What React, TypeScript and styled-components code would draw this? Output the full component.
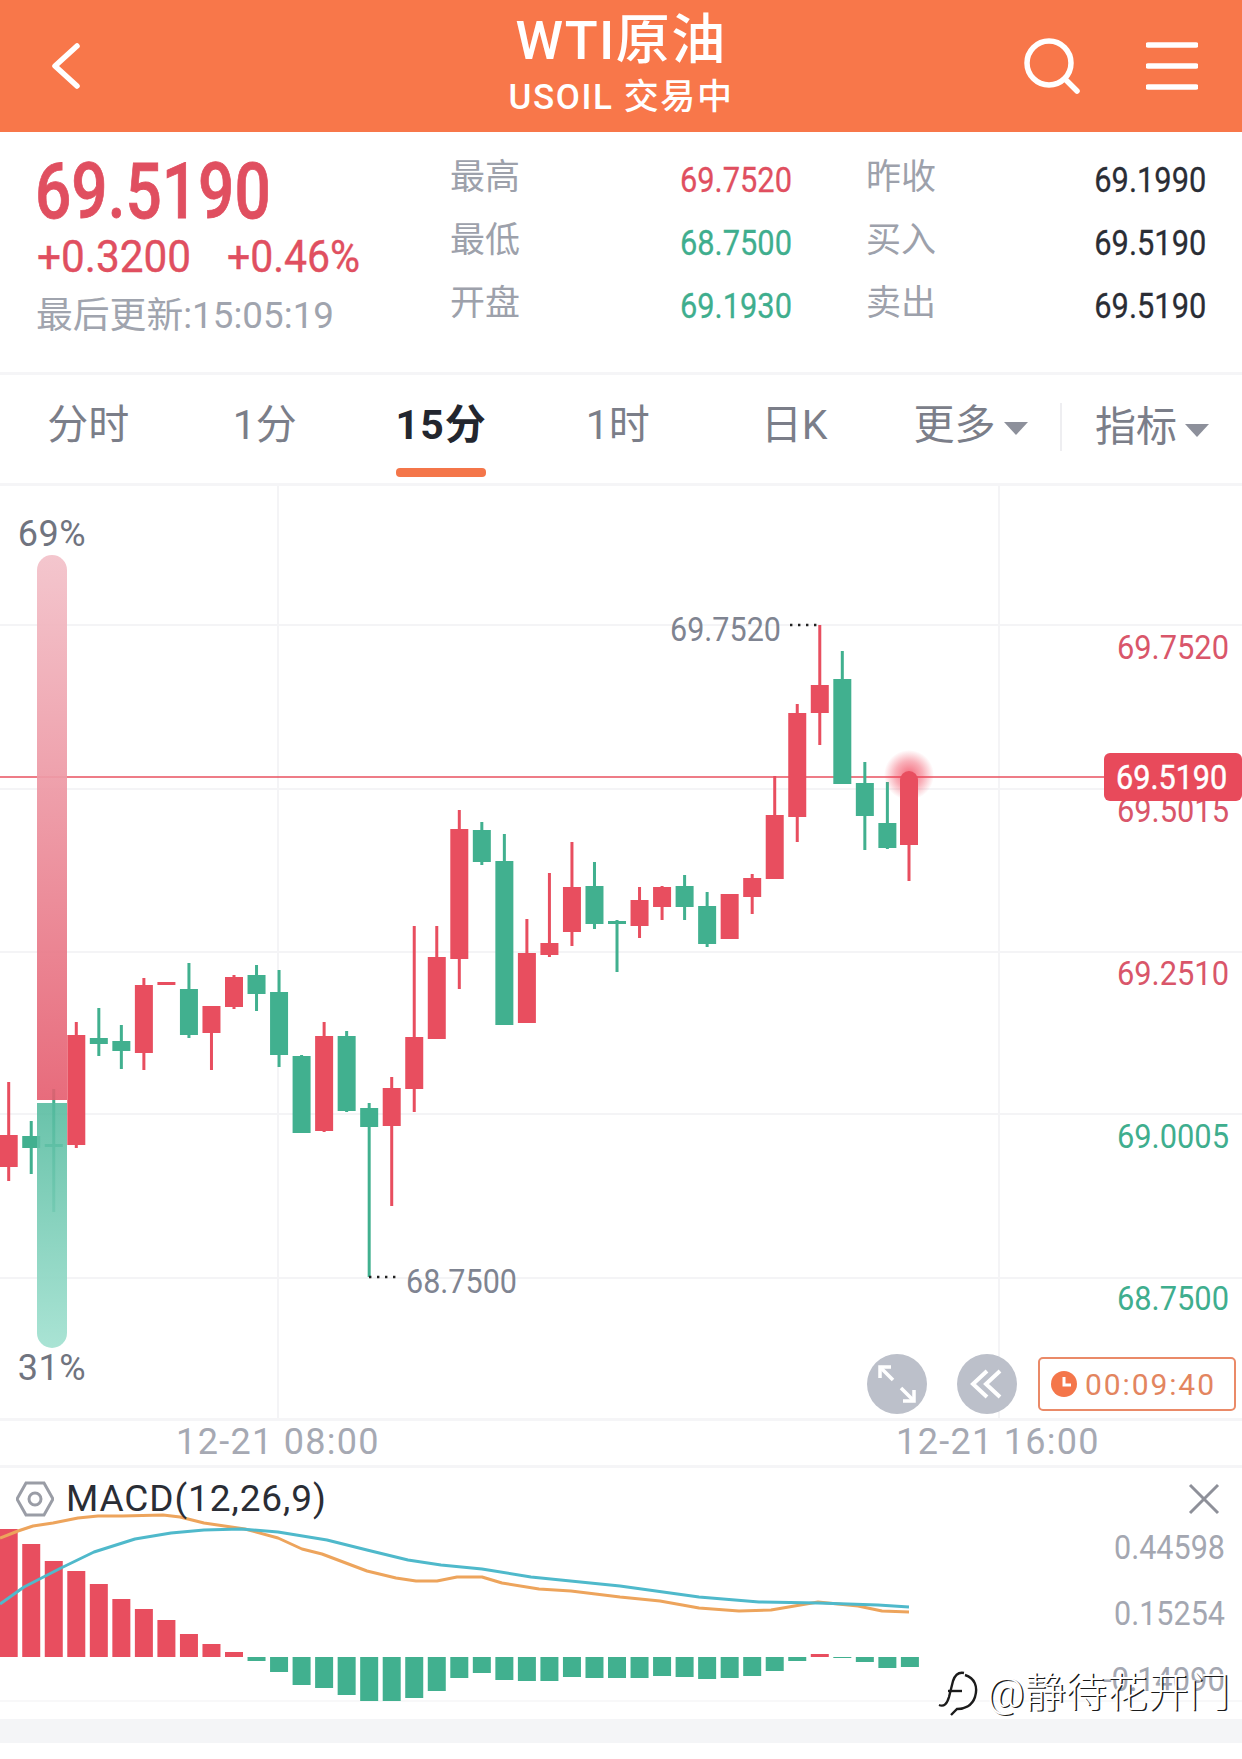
import styled, { createGlobalStyle } from "styled-components";

const latin = `"Roboto", "Noto Sans CJK SC", sans-serif`;

const RED = "#e84e5f";
const GREEN = "#41b08f";

type Candle = [up: boolean, high: number, top: number, bottom: number, low: number];

const candles: Candle[] = [
  [true, 1082, 1135, 1167, 1181],
  [false, 1121, 1136, 1148, 1174],
  [false, 1089, 1144, 1147, 1212],
  [true, 1022, 1035, 1145, 1148],
  [false, 1008, 1038, 1044, 1056],
  [false, 1025, 1041, 1051, 1069],
  [true, 978, 985, 1053, 1070],
  [true, 982, 982, 985, 985],
  [false, 963, 989, 1035, 1038],
  [true, 1006, 1006, 1033, 1070],
  [true, 975, 977, 1007, 1009],
  [false, 965, 975, 994, 1011],
  [false, 970, 992, 1055, 1067],
  [false, 1055, 1056, 1133, 1133],
  [true, 1022, 1036, 1131, 1132],
  [false, 1031, 1036, 1111, 1112],
  [false, 1103, 1108, 1127, 1277],
  [true, 1077, 1088, 1126, 1206],
  [true, 926, 1037, 1089, 1112],
  [true, 926, 957, 1039, 1039],
  [true, 810, 829, 959, 989],
  [false, 822, 830, 862, 865],
  [false, 834, 861, 1025, 1025],
  [true, 919, 953, 1023, 1023],
  [true, 873, 943, 955, 957],
  [true, 842, 887, 932, 946],
  [false, 862, 886, 924, 929],
  [false, 920, 921, 924, 972],
  [true, 887, 900, 926, 938],
  [true, 886, 887, 907, 920],
  [false, 875, 886, 907, 920],
  [false, 892, 906, 944, 947],
  [true, 894, 894, 939, 939],
  [true, 874, 878, 897, 914],
  [true, 776, 815, 879, 879],
  [true, 704, 713, 817, 842],
  [true, 625, 685, 713, 745],
  [false, 651, 679, 784, 784],
  [false, 762, 783, 816, 850],
  [false, 782, 823, 848, 849],
];

// positive = red bar above the zero line, negative = green bar below it
const histogram = [
  128, 113, 96, 86, 73, 58, 48, 37, 23, 13, 5, -4, -15, -28, -31, -38, -44, -44, -41, -34, -21,
  -16, -23, -24, -24, -20, -21, -21, -21, -19, -20, -22, -21, -19, -14, -4, 3, -1, -5, -11, -10,
];

const orangeLine =
  "0,1538 18,1531 33,1526 53,1523 78,1518 98,1516 122,1516 163,1515 180,1517 204,1523 245,1529 278,1538 302,1549 322,1554 367,1571 396,1578 416,1581 437,1581 457,1577 482,1577 502,1583 539,1589 571,1591 620,1597 660,1601 699,1608 739,1611 771,1610 818,1602 858,1606 882,1611 909,1612";
const tealLine =
  "0,1604 24,1587 61,1568 94,1552 135,1539 171,1533 204,1530 241,1529 278,1532 327,1540 367,1550 408,1560 441,1565 482,1569 531,1577 620,1586 699,1597 759,1602 818,1603 878,1605 909,1607";

const slotX = (i: number) => 8.7 + 22.53 * i;

const GlobalStyle = createGlobalStyle`
  html, body {
    margin: 0;
    padding: 0;
    background: #fff;
  }
`;

const Page = styled.div`
  position: relative;
  width: 1242px;
  height: 1759px;
  overflow: hidden;
  background: #fff;
  font-family: ${latin};
`;

const Header = styled.header`
  display: grid;
  grid-template-columns: 1fr auto 1fr;
  align-items: center;
  height: 132px;
  background: #f8774a;
  color: #fff;
`;

const HeaderLeft = styled.div`
  display: flex;
  padding-left: 51px;
`;

const HeaderRight = styled.div`
  display: flex;
  justify-content: flex-end;
  align-items: center;
  gap: 66px;
  padding-right: 44px;
`;

const TitleBlock = styled.div`
  display: flex;
  flex-direction: column;
  align-items: center;
`;

const Title = styled.div`
  font-size: 54px;
  line-height: 56px;
  font-weight: 500;
  letter-spacing: 1.4px;
  margin-top: -3px;
`;

const Subtitle = styled.div`
  font-size: 35px;
  line-height: 38px;
  font-weight: 500;
  letter-spacing: 1.6px;
  margin-top: 10px;
`;

const Summary = styled.section`
  display: flex;
  height: 240px;
`;

const Quote = styled.div`
  width: 450px;
  padding: 32px 0 0 37px;
  box-sizing: border-box;
`;

const BigPrice = styled.div`
  margin-left: -2px;
  font-size: 77px;
  line-height: 56px;
  font-weight: 500;
  color: #e04f60;
  transform: scaleX(0.83);
  transform-origin: left center;
  -webkit-text-stroke: 0.8px #e04f60;
`;

const ChangeRow = styled.div`
  display: grid;
  grid-template-columns: 190px auto;
  margin-top: 15px;
  font-size: 45px;
  line-height: 44px;
  color: #e04f60;
`;

const ChangeFigure = styled.span<{ $squeeze: number }>`
  display: inline-block;
  white-space: nowrap;
  transform: scaleX(${(p) => p.$squeeze});
  transform-origin: left center;
  -webkit-text-stroke: 0.4px #e04f60;
`;

const Updated = styled.div`
  margin: 17px 0 0 -1px;
  font-size: 36.8px;
  line-height: 40px;
  color: #a0a4ae;
`;

const StatGrid = styled.div`
  display: grid;
  grid-template-columns: 230px 186px 229px 111px;
  grid-auto-rows: 63px;
  align-items: center;
  padding-top: 14px;
`;

const StatLabel = styled.span`
  font-size: 35px;
  line-height: 40px;
  color: #9da1ab;
`;

const StatValue = styled.span<{ $tone: "up" | "down" | "flat" }>`
  justify-self: ${(p) => (p.$tone === "flat" ? "end" : "start")};
  font-size: 35px;
  line-height: 40px;
  padding-top: 6px;
  white-space: nowrap;
  transform: scaleX(0.88);
  transform-origin: ${(p) => (p.$tone === "flat" ? "right" : "left")} center;
  -webkit-text-stroke: 0.3px currentColor;
  color: ${(p) => (p.$tone === "up" ? "#e04f60" : p.$tone === "down" ? "#3fae8e" : "#2a2d35")};
`;

const Tabs = styled.nav`
  display: grid;
  grid-template-columns: repeat(5, 176.5px) 177.5px 182px;
  height: 108px;
  border-top: 3px solid #f5f5f7;
  border-bottom: 3px solid #f5f5f7;
`;

const Tab = styled.div<{ $active?: boolean }>`
  display: flex;
  flex-direction: column;
  align-items: center;
  padding-top: 26px;
  font-size: 41px;
  line-height: 48px;
  font-weight: ${(p) => (p.$active ? 700 : 400)};
  letter-spacing: ${(p) => (p.$active ? 1.2 : 0)}px;
  color: ${(p) => (p.$active ? "#23262e" : "#7b7e89")};
`;

const TabMark = styled.span`
  width: 90px;
  height: 9px;
  margin-top: 19px;
  border-radius: 4px;
  background: #f4764a;
`;

const DropTab = styled.div<{ $divided?: boolean }>`
  display: flex;
  align-items: center;
  gap: 8px;
  height: 48px;
  margin-top: 26px;
  padding-left: ${(p) => (p.$divided ? 33 : 31)}px;
  font-size: 41px;
  line-height: 48px;
  color: #7b7e89;
  ${(p) => (p.$divided ? "border-left: 2px solid #eeeef1; transform: translateY(2px);" : "")}
`;

const Caret = styled.span`
  width: 0;
  height: 0;
  margin-top: 6px;
  border-left: 12px solid transparent;
  border-right: 12px solid transparent;
  border-top: 13px solid #8d909b;
`;

const ChartPane = styled.section`
  position: relative;
  height: 932px;
`;

const ChartSvg = styled.svg`
  display: block;
  width: 1242px;
`;

const AxisText = styled.text<{ $tone: "up" | "down" | "muted" }>`
  font-family: ${latin};
  font-size: 34px;
  text-anchor: end;
  dominant-baseline: central;
  -webkit-text-stroke: 0.6px currentColor;
  fill: ${(p) => (p.$tone === "up" ? "#d9566a" : p.$tone === "down" ? "#3fae8e" : "#a4a7b1")};
  color: ${(p) => (p.$tone === "up" ? "#d9566a" : p.$tone === "down" ? "#3fae8e" : "#a4a7b1")};
`;

const ExtremeText = styled.text`
  font-family: ${latin};
  font-size: 34px;
  dominant-baseline: central;
  -webkit-text-stroke: 0.5px #7f8491;
  fill: #7f8491;
`;

const Sentiment = styled.div`
  position: absolute;
  left: 0;
  top: 28px;
  width: 104px;
  display: flex;
  flex-direction: column;
  align-items: center;
`;

const SentimentLabel = styled.div`
  font-size: 36px;
  line-height: 40px;
  letter-spacing: 0.5px;
  color: #70747f;
`;

const SentimentBar = styled.div`
  display: flex;
  flex-direction: column;
  gap: 3px;
  width: 30px;
  height: 793px;
  margin-top: 1px;
  border-radius: 15px;
  overflow: hidden;
`;

const BarPart = styled.div<{ $side: "bull" | "bear" }>`
  background: ${(p) =>
    p.$side === "bull"
      ? "linear-gradient(180deg, rgba(243, 195, 203, 0.95), rgba(229, 92, 110, 0.9))"
      : "linear-gradient(180deg, rgba(84, 186, 158, 0.88), rgba(165, 226, 210, 0.95))"};
`;

const PriceTag = styled.div`
  position: absolute;
  right: 0;
  top: 267px;
  width: 138px;
  height: 48px;
  box-sizing: border-box;
  padding-left: 12px;
  border-radius: 6px;
  background: #e84a5b;
  color: #fff;
  font-size: 34px;
  line-height: 48px;
`;

const PriceTagText = styled.span`
  display: inline-block;
  transform: scaleX(0.9);
  transform-origin: left center;
  -webkit-text-stroke: 0.5px #fff;
`;

const ChartTools = styled.div`
  position: absolute;
  right: 6px;
  bottom: 4px;
  display: flex;
  align-items: center;
  gap: 30px;
`;

const RoundButton = styled.button`
  display: flex;
  align-items: center;
  justify-content: center;
  width: 60px;
  height: 60px;
  padding: 0;
  border: 0;
  border-radius: 50%;
  background: #bcc0ca;
`;

const Countdown = styled.div`
  display: flex;
  align-items: center;
  gap: 8px;
  width: 198px;
  height: 54px;
  box-sizing: border-box;
  margin-left: -9px;
  padding-left: 11px;
  border: 2px solid #ea8a68;
  border-radius: 5px;
  font-size: 30px;
  letter-spacing: 1.9px;
  color: #e3855f;
`;

const TimeAxis = styled.div`
  position: relative;
  height: 44px;
  border-top: 3px solid #f5f5f7;
  border-bottom: 3px solid #f5f5f7;
`;

const TimeStamp = styled.span<{ $center: number }>`
  position: absolute;
  top: -1px;
  left: ${(p) => p.$center}px;
  transform: translateX(-50%);
  font-size: 36px;
  line-height: 44px;
  letter-spacing: 1.3px;
  white-space: nowrap;
  color: #a6a9b3;
`;

const MacdPane = styled.section`
  position: relative;
  height: 251px;
`;

const MacdHead = styled.div`
  position: absolute;
  left: 16px;
  right: 22px;
  top: 13px;
  display: flex;
  align-items: center;
  gap: 12px;
  font-size: 37px;
  line-height: 36px;
  letter-spacing: 0.9px;
  color: #2a2d35;
`;

const CloseIcon = styled.svg`
  margin-left: auto;
`;

const BottomBand = styled.div`
  height: 24px;
  background: #f4f5f7;
`;

const Watermark = styled.div`
  position: absolute;
  left: 937px;
  top: 1668px;
  display: flex;
  align-items: center;
  gap: 8px;
  font-size: 41px;
  line-height: 50px;
  font-weight: 300;
  white-space: nowrap;
  color: #fff;
  text-shadow: 1.5px 1px 0 #1b1b1b;
`;

function ChartBody() {
  return (
    <ChartSvg viewBox="0 486 1242 932" height={932}>
      <defs>
        <radialGradient id="pulse">
          <stop offset="0%" stopColor="#f0384f" stopOpacity="0.75" />
          <stop offset="55%" stopColor="#f0384f" stopOpacity="0.4" />
          <stop offset="100%" stopColor="#f0384f" stopOpacity="0" />
        </radialGradient>
      </defs>
      {[625, 789, 952, 1114, 1278].map((y) => (
        <line key={y} x1="0" x2="1242" y1={y} y2={y} stroke="#f4f4f6" strokeWidth="2" />
      ))}
      {[278, 999].map((x) => (
        <line key={x} x1={x} x2={x} y1="486" y2="1418" stroke="#f4f4f6" strokeWidth="2" />
      ))}
      <line x1="0" x2="1110" y1="777" y2="777" stroke="#e8505f" strokeWidth="1.4" />
      {candles.map(([up, high, top, bottom, low], i) => {
        const x = slotX(i);
        return (
          <g key={i} fill={up ? RED : GREEN}>
            <rect x={x - 1.5} y={high} width="3" height={low - high} />
            <rect x={x - 9} y={top} width="18" height={bottom - top} />
          </g>
        );
      })}
      {/* live candle: round top with a pulse behind it */}
      <circle cx="909" cy="775" r="25" fill="url(#pulse)" />
      <rect x="907.5" y="830" width="3" height="51" fill={RED} />
      <path d="M900 845V780a9 9 0 0 1 18 0V845Z" fill={RED} />
      <AxisText $tone="up" x="1229" y="647" textLength={112} lengthAdjust="spacingAndGlyphs">69.7520</AxisText>
      <AxisText $tone="up" x="1229" y="810" textLength={112} lengthAdjust="spacingAndGlyphs">69.5015</AxisText>
      <AxisText $tone="up" x="1229" y="973" textLength={112} lengthAdjust="spacingAndGlyphs">69.2510</AxisText>
      <AxisText $tone="down" x="1229" y="1136" textLength={112} lengthAdjust="spacingAndGlyphs">69.0005</AxisText>
      <AxisText $tone="down" x="1229" y="1298" textLength={112} lengthAdjust="spacingAndGlyphs">68.7500</AxisText>
      <ExtremeText x="670" y="629" textLength={111} lengthAdjust="spacingAndGlyphs">69.7520</ExtremeText>
      <ExtremeText x="406" y="1281" textLength={111} lengthAdjust="spacingAndGlyphs">68.7500</ExtremeText>
      <line x1="790" x2="820" y1="625" y2="625" stroke="#222" strokeWidth="2.4" strokeDasharray="2.4 5.6" />
      <line x1="369" x2="400" y1="1277" y2="1277" stroke="#222" strokeWidth="2.4" strokeDasharray="2.4 5.6" />
    </ChartSvg>
  );
}

function MacdBody() {
  const zero = 1657;
  return (
    <ChartSvg viewBox="0 1468 1242 251" height={251}>
      <line x1="0" x2="1242" y1="1701" y2="1701" stroke="#f1f1f3" strokeWidth="1" />
      {histogram.map((v, i) => {
        const x = slotX(i) - 9;
        return v > 0 ? (
          <rect key={i} x={x} y={zero - v} width="18" height={v} fill={RED} />
        ) : (
          <rect key={i} x={x} y={zero} width="18" height={-v} fill={GREEN} />
        );
      })}
      <polyline points={orangeLine} fill="none" stroke="#eda45c" strokeWidth="3" strokeLinejoin="round" />
      <polyline points={tealLine} fill="none" stroke="#4fb9cb" strokeWidth="3" strokeLinejoin="round" />
      <AxisText $tone="muted" x="1225" y="1547" textLength={111} lengthAdjust="spacingAndGlyphs">0.44598</AxisText>
      <AxisText $tone="muted" x="1225" y="1613" textLength={111} lengthAdjust="spacingAndGlyphs">0.15254</AxisText>
      <AxisText $tone="muted" x="1225" y="1679" textLength={122} lengthAdjust="spacingAndGlyphs">-0.14090</AxisText>
    </ChartSvg>
  );
}

export default function App() {
  return (
    <Page>
      <GlobalStyle />
      <Header>
        <HeaderLeft>
          <svg width="30" height="48" viewBox="0 0 30 48" fill="none" stroke="#fff" strokeWidth="5.5" strokeLinecap="round" strokeLinejoin="round">
            <polyline points="26,4 4,24 26,44" />
          </svg>
        </HeaderLeft>
        <TitleBlock>
          <Title>WTI原油</Title>
          <Subtitle>USOIL 交易中</Subtitle>
        </TitleBlock>
        <HeaderRight>
          <svg width="56" height="56" viewBox="0 0 56 56" fill="none" stroke="#fff" strokeWidth="5.5" strokeLinecap="round">
            <circle cx="25" cy="25" r="22" />
            <line x1="41" y1="41" x2="53" y2="53" />
          </svg>
          <svg width="52" height="50" viewBox="0 0 52 50" fill="none" stroke="#fff" strokeWidth="5.5" strokeLinecap="round">
            <line x1="2" y1="4" x2="50" y2="4" />
            <line x1="2" y1="25" x2="50" y2="25" />
            <line x1="2" y1="46" x2="50" y2="46" />
          </svg>
        </HeaderRight>
      </Header>

      <Summary>
        <Quote>
          <BigPrice>69.5190</BigPrice>
          <ChangeRow>
            <ChangeFigure $squeeze={0.94}>+0.3200</ChangeFigure>
            <ChangeFigure $squeeze={0.91}>+0.46%</ChangeFigure>
          </ChangeRow>
          <Updated>最后更新:15:05:19</Updated>
        </Quote>
        <StatGrid>
          <StatLabel>最高</StatLabel>
          <StatValue $tone="up">69.7520</StatValue>
          <StatLabel>昨收</StatLabel>
          <StatValue $tone="flat">69.1990</StatValue>
          <StatLabel>最低</StatLabel>
          <StatValue $tone="down">68.7500</StatValue>
          <StatLabel>买入</StatLabel>
          <StatValue $tone="flat">69.5190</StatValue>
          <StatLabel>开盘</StatLabel>
          <StatValue $tone="down">69.1930</StatValue>
          <StatLabel>卖出</StatLabel>
          <StatValue $tone="flat">69.5190</StatValue>
        </StatGrid>
      </Summary>

      <Tabs>
        <Tab>分时</Tab>
        <Tab>1分</Tab>
        <Tab $active>
          15分
          <TabMark />
        </Tab>
        <Tab>1时</Tab>
        <Tab>日K</Tab>
        <DropTab>
          更多
          <Caret />
        </DropTab>
        <DropTab $divided>
          指标
          <Caret />
        </DropTab>
      </Tabs>

      <ChartPane>
        <ChartBody />
        <Sentiment>
          <SentimentLabel>69%</SentimentLabel>
          <SentimentBar>
            <BarPart $side="bull" style={{ flex: 69 }} />
            <BarPart $side="bear" style={{ flex: 31 }} />
          </SentimentBar>
          <SentimentLabel>31%</SentimentLabel>
        </Sentiment>
        <PriceTag>
          <PriceTagText>69.5190</PriceTagText>
        </PriceTag>
        <ChartTools>
          <RoundButton>
            <svg width="44" height="44" viewBox="0 0 44 44" fill="none" stroke="#fff" strokeWidth="3.5" strokeLinejoin="miter">
              <line x1="5" y1="5" x2="18" y2="18" />
              <polyline points="5,16 5,5 16,5" />
              <line x1="26" y1="26" x2="39" y2="39" />
              <polyline points="39,28 39,39 28,39" />
            </svg>
          </RoundButton>
          <RoundButton>
            <svg width="36" height="36" viewBox="0 0 36 36" fill="none" stroke="#fff" strokeWidth="4">
              <polyline points="18,5 4,18 18,31" />
              <polyline points="31,5 17,18 31,31" />
            </svg>
          </RoundButton>
          <Countdown>
            <svg width="26" height="26" viewBox="0 0 26 26">
              <circle cx="13" cy="13" r="13" fill="#f4764a" />
              <polyline points="13,6 13,14 20,14" fill="none" stroke="#fff" strokeWidth="3" />
            </svg>
            00:09:40
          </Countdown>
        </ChartTools>
      </ChartPane>

      <TimeAxis>
        <TimeStamp $center={278}>12-21 08:00</TimeStamp>
        <TimeStamp $center={998}>12-21 16:00</TimeStamp>
      </TimeAxis>

      <MacdPane>
        <MacdBody />
        <MacdHead>
          <svg width="38" height="36" viewBox="0 0 38 36" fill="none" stroke="#9a9da6" strokeWidth="3">
            <polygon points="10,2 28,2 37,18 28,34 10,34 1,18" />
            <circle cx="19" cy="18" r="6" />
          </svg>
          MACD(12,26,9)
          <CloseIcon width="32" height="32" viewBox="0 0 32 32" fill="none" stroke="#8e9099" strokeWidth="3">
            <line x1="2" y1="2" x2="30" y2="30" />
            <line x1="30" y1="2" x2="2" y2="30" />
          </CloseIcon>
        </MacdHead>
      </MacdPane>
      <BottomBand />

      <Watermark>
        <svg width="42" height="48" viewBox="0 0 42 48" fill="none" stroke="#1b1b1b" strokeWidth="2.4">
          <path d="M2 36c5 2 8-1 10-8l4-16c2-6 6-9 11-8" />
          <path d="M11 22h14" />
          <path d="M28 6c10 3 13 12 10 22-3 9-11 12-18 12l-6 6" />
        </svg>
        <span>@静待花开门</span>
      </Watermark>
    </Page>
  );
}
